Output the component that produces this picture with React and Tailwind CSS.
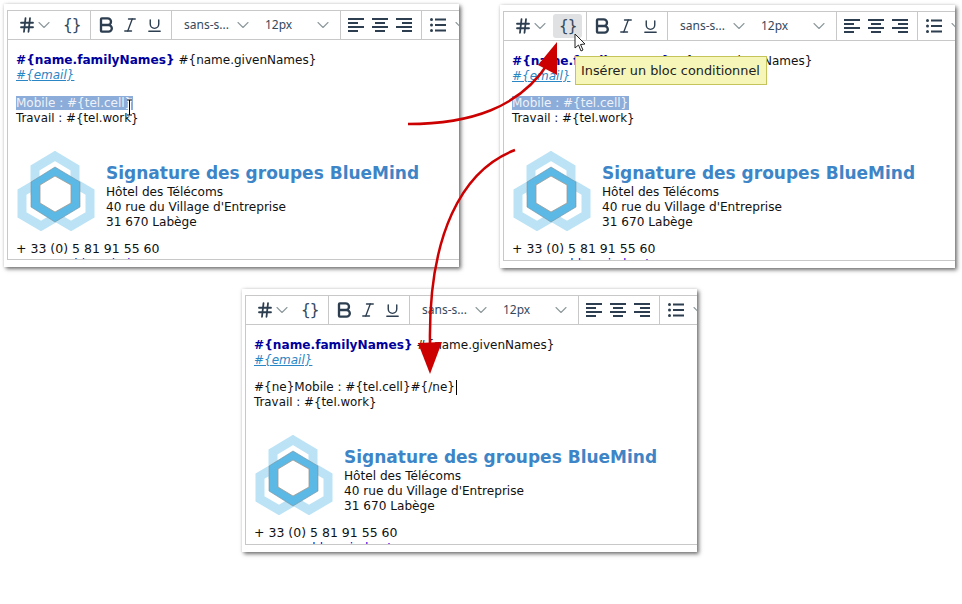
import { Bold, Italic, Underline, ChevronDown, Hash } from 'lucide-react'

const FONT = 'font-["DejaVu_Sans",sans-serif]'

function AlignIcon({ kind }) {
  const rows = {
    left:   [[0, 16], [0, 10], [0, 16], [0, 10]],
    center: [[0, 16], [3, 10], [0, 16], [3, 10]],
    right:  [[0, 16], [6, 10], [0, 16], [6, 10]],
  }[kind]
  return (
    <svg width="16" height="14" viewBox="0 0 16 14" className="shrink-0">
      {rows.map(([x, w], i) => (
        <rect key={i} x={x} y={i * 4} width={w} height="2" fill="#2c3e50" />
      ))}
    </svg>
  )
}

function ListIcon() {
  return (
    <svg width="16" height="14" viewBox="0 0 16 14" className="shrink-0">
      {[1.5, 7, 12.5].map(y => (
        <g key={y}>
          <circle cx="1.5" cy={y} r="1.5" fill="#2c3e50" />
          <rect x="5" y={y - 1} width="11" height="2" fill="#2c3e50" />
        </g>
      ))}
    </svg>
  )
}

function Logo() {
  return (
    <svg width="80" height="82" viewBox="17 151 80 82" className="ml-px shrink-0">
      <g fill="none" stroke="#bce3f5" strokeWidth="9">
        <polygon points="55,156 75,168 75,192 55,204 35,192 35,168" />
        <polygon points="41,181 60,192 60,215 41,226 22,215 22,192" />
        <polygon points="71,181 90,192 90,215 71,226 52,215 52,192" />
      </g>
      <polygon
        points="55,167 80,182 80,207 55,222 31,207 31,182"
        fill="#5cb8e4"
        stroke="#78909c"
        strokeWidth="0.6"
      />
      <polygon
        points="55,176 71,185 71,203 55,212 40,203 40,185"
        fill="#ffffff"
        stroke="#a09a94"
        strokeWidth="0.8"
      />
    </svg>
  )
}

function Toolbar({ hoverBlock }) {
  return (
    <div className="flex h-[29px] shrink-0 border-b border-[#c8c8c8] text-[#34495e]">
      <div className="flex w-[83px] shrink-0 items-center border-r border-[#c8c8c8] pl-[10px]">
        <Hash size={18} strokeWidth={2.4} className="shrink-0 text-[#2c3e50]" />
        <ChevronDown size={20} strokeWidth={1.3} className="-ml-[2px] shrink-0 text-[#8d989c]" />
        <span className={`ml-[3px] flex h-[24px] w-[29px] shrink-0 items-center justify-center rounded-[3px] text-[16px] leading-none tracking-[-1.5px] ${hoverBlock ? 'bg-[#dfe1e2]' : ''}`}>
          {'{}'}
        </span>
      </div>
      <div className="flex w-[81px] shrink-0 items-center gap-[5px] border-r border-[#c8c8c8] pl-[5px] text-[#2c3e50]">
        <Bold size={20} strokeWidth={2.8} className="shrink-0" />
        <Italic size={18} strokeWidth={1.8} className="shrink-0" />
        <Underline size={17} strokeWidth={2} className="ml-[2px] shrink-0" />
      </div>
      <div className='flex w-[169px] shrink-0 items-center border-r border-[#c8c8c8] font-["Noto_Sans",sans-serif] text-[12px]'>
        <span className="ml-[12px] w-[49px] whitespace-nowrap">sans-s...</span>
        <ChevronDown size={20} strokeWidth={1.3} className="shrink-0 text-[#8d989c]" />
        <span className="ml-[12px] w-[48px]">12px</span>
        <ChevronDown size={20} strokeWidth={1.3} className="shrink-0 text-[#8d989c]" />
      </div>
      <div className="flex w-[81px] shrink-0 items-center gap-[8px] border-r border-[#c8c8c8] pl-[7px]">
        <AlignIcon kind="left" />
        <AlignIcon kind="center" />
        <AlignIcon kind="right" />
      </div>
      <div className="flex shrink-0 items-center pl-[8px]">
        <ListIcon />
        <ChevronDown size={20} strokeWidth={1.3} className="ml-[5px] shrink-0 text-[#8d989c]" />
      </div>
    </div>
  )
}

function Signature({ children }) {
  return (
    <div className="pl-[8px] pt-[13px] text-[12px] leading-[15px] text-[#111]">
      <p>
        <b className="text-[12.15px] text-[#00009c]">{'#{name.familyNames}'}</b>
        {' #{name.givenNames}'}
      </p>
      <p className="italic text-[#2a86c4] underline">{'#{email}'}</p>
      <div className="mt-[13px]">{children}</div>
      <div className="mt-[25px] flex">
        <Logo />
        <div className="ml-[9px] pt-[13px] text-[12.12px]">
          <p className="mb-[2px] text-[17px] font-bold leading-[19px] text-[#3d85c6]">Signature des groupes BlueMind</p>
          <p>Hôtel des Télécoms</p>
          <p>40 rue du Village d'Entreprise</p>
          <p>31 670 Labège</p>
        </div>
      </div>
      <p className="mt-[8px] text-[12.5px]">+ 33 (0) 5 81 91 55 60</p>
      <p className="mt-[1px] ml-[26px] text-[#0000ee] underline">www.bluemind.net</p>
    </div>
  )
}

function EditorWindow({ className, hoverBlock, children }) {
  return (
    <div className={`absolute flex h-[263px] w-[455px] flex-col bg-white pb-[7px] pl-[3px] pt-[6px] shadow-[2px_2px_4px_rgba(0,0,0,0.55),0_0_3px_rgba(0,0,0,0.12)] ${className}`}>
      <div className="flex min-h-0 flex-1 flex-col overflow-hidden border-b border-l border-t border-[#c8c8c8]">
        <Toolbar hoverBlock={hoverBlock} />
        <Signature>{children}</Signature>
      </div>
    </div>
  )
}

function Selected() {
  return (
    <>
      <p><span className="bg-[#8cacd9] pr-[1px] text-[#eef2f8]">{'Mobile : #{tel.cell}'}</span></p>
      <p className="text-[11.85px]">{'Travail : #{tel.work}'}</p>
    </>
  )
}

export default function App() {
  return (
    <div className={`relative h-[604px] w-[962px] overflow-hidden bg-white ${FONT}`}>
      <EditorWindow className="left-[4px] top-[4px]">
        <Selected />
      </EditorWindow>

      <EditorWindow className="left-[500px] top-[5px]" hoverBlock>
        <div className="-mt-px mb-px">
          <Selected />
        </div>
      </EditorWindow>

      <EditorWindow className="left-[242px] top-[289px]">
        <div className="-mt-px mb-px">
          <p>
            {'#{ne}Mobile : #{tel.cell}#{/ne}'}
            <span className="ml-[1px] inline-block h-[15px] w-px bg-black align-top" />
          </p>
          <p className="text-[11.85px]">{'Travail : #{tel.work}'}</p>
        </div>
      </EditorWindow>

      {/* tooltip over the second window */}
      <div className="absolute left-[575px] top-[56px] flex h-[29px] w-[192px] items-center border border-[#c4c45a] bg-[#f6f6b8] pl-[5px] text-[12.85px] text-[#222]">
        Insérer un bloc conditionnel
      </div>

      {/* annotation arrows and pointers */}
      <svg width="962" height="604" viewBox="0 0 962 604" className="pointer-events-none absolute left-0 top-0">
        <path d="M408 124 C470 124 520 108 549 62" fill="none" stroke="#cc0000" strokeWidth="2.5" />
        <polygon points="557,42 538,65 557,75" fill="#cc0000" />
        <path d="M515 150 C462 170 428 235 430 345" fill="none" stroke="#cc0000" strokeWidth="2.5" />
        <polygon points="418,343 442,342 430,374" fill="#cc0000" />

        {/* I-beam */}
        <path d="M127 100 h5 M129.5 100 v15 M127 115 h5" fill="none" stroke="#fff" strokeWidth="3" />
        <path d="M127 100 h5 M129.5 100 v15 M127 115 h5" fill="none" stroke="#000" strokeWidth="1" />

        {/* arrow pointer */}
        <path d="M575 34 L575 48 L578.5 45 L581 51 L583 50 L580.5 44.5 L585 44 Z" fill="#fff" stroke="#222" strokeWidth="1" />
      </svg>
    </div>
  )
}
